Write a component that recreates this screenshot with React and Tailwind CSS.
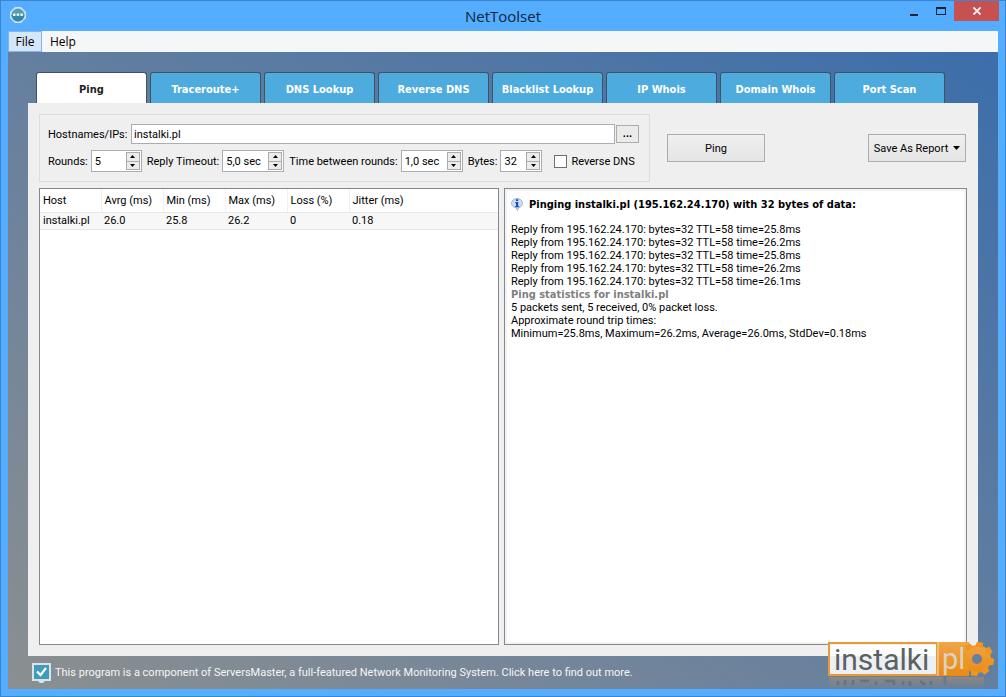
import { useState } from "react";

const tabs = [
  "Ping",
  "Traceroute+",
  "DNS Lookup",
  "Reverse DNS",
  "Blacklist Lookup",
  "IP Whois",
  "Domain Whois",
  "Port Scan",
];

const columns = [
  { name: "Host", width: "w-[61px]" },
  { name: "Avrg (ms)", width: "w-[62px]" },
  { name: "Min (ms)", width: "w-[62px]" },
  { name: "Max (ms)", width: "w-[62px]" },
  { name: "Loss (%)", width: "w-[62px]" },
  { name: "Jitter (ms)", width: "w-auto" },
];

const results = [["instalki.pl", "26.0", "25.8", "26.2", "0", "0.18"]];

const replies = ["25.8ms", "26.2ms", "25.8ms", "26.2ms", "26.1ms"];

function TitleBar() {
  return (
    <header className="grid grid-cols-3 items-start h-[30px] font-['Open_Sans',sans-serif]">
      <svg className="w-[18px] h-[18px] mt-[5px] ml-px" viewBox="0 0 18 18">
        <path d="M6 1h6l5 5v6l-5 5H6l-5-5V6z" fill="#d9dfe2" />
        <circle cx="9" cy="9" r="6.5" fill="#4f9fba" />
        <path d="M2.500 9a6.500 6.500 0 0 0 13 0z" fill="#2f89a8" />
        <path d="M4 7.500h2.500v2.500H4zM7.700 7.500h2.500v2.500H7.700zM11.400 7.500h2.500v2.500h-2.500z" fill="#e6f1f5" />
      </svg>
      <h1 className="text-center text-[15px] leading-[20px] mt-[5px] text-[#10243c]">
        NetToolset
      </h1>
      <div className="flex justify-end -mr-px">
        <button aria-label="Minimize" className="w-[27px] h-5 flex justify-center">
          <svg className="w-2 h-4" viewBox="0 0 8 16">
            <path d="M0 13h8v2H0z" fill="#10243c" />
          </svg>
        </button>
        <button aria-label="Maximize" className="w-[27px] h-5 flex justify-center">
          <svg className="w-[10px] h-4" viewBox="0 0 10 16">
            <path d="M0 6h10v8H0zM1 8v5h8V8z" fill="#10243c" fillRule="evenodd" />
          </svg>
        </button>
        <button
          aria-label="Close"
          className="w-[45px] h-5 bg-[#c75050] flex justify-center items-center"
        >
          <svg className="w-2 h-2" viewBox="0 0 8 8">
            <path d="M.5.5l7 7M7.500.5l-7 7" stroke="#fff" strokeWidth="1.700" />
          </svg>
        </button>
      </div>
    </header>
  );
}

function Spinner({ id, label, value, width }) {
  const [text, setText] = useState(value);
  return (
    <div className="flex items-center gap-[3px]">
      <label htmlFor={id} className="whitespace-nowrap">
        {label}
      </label>
      <div className={`flex h-[22px] bg-white border border-[#abadb3] ${width}`}>
        <input
          id={id}
          value={text}
          onChange={(e) => setText(e.target.value)}
          className="w-0 flex-1 pl-[3px] outline-none"
        />
        <div className="flex flex-col w-[15px] py-px pr-px">
          <button
            aria-label={`Increase ${label}`}
            className="flex-1 flex items-center justify-center border border-[#acacac] bg-[#ececec]"
          >
            <svg className="w-[5px] h-[3px]" viewBox="0 0 5 3">
              <path d="M2.500 0L5 3H0z" />
            </svg>
          </button>
          <button
            aria-label={`Decrease ${label}`}
            className="flex-1 flex items-center justify-center border border-t-0 border-[#acacac] bg-[#ececec]"
          >
            <svg className="w-[5px] h-[3px]" viewBox="0 0 5 3">
              <path d="M0 0h5L2.500 3z" />
            </svg>
          </button>
        </div>
      </div>
    </div>
  );
}

function PingForm() {
  const [host, setHost] = useState("instalki.pl");
  return (
    <div className="flex items-start">
      <div className="w-[611px] h-[68px] border border-[#dcdcdc] pl-2 pr-[10px] pt-[9px]">
        <div className="flex items-center">
          <label htmlFor="host" className="w-[83px]">
            Hostnames/IPs:
          </label>
          <input
            id="host"
            value={host}
            onChange={(e) => setHost(e.target.value)}
            className="flex-1 min-w-0 h-5 bg-white border border-[#abadb3] pl-[2px] outline-none"
          />
          <button className="w-[23px] h-[18px] ml-px border border-[#acacac] bg-[#ebebeb] font-bold leading-[14px]">
            ...
          </button>
        </div>
        <div className="flex items-center gap-[5px] mt-[6px]">
          <Spinner id="rounds" label="Rounds:" value="5" width="w-[51px]" />
          <Spinner id="timeout" label="Reply Timeout:" value="5,0 sec" width="w-[62px]" />
          <Spinner id="between" label="Time between rounds:" value="1,0 sec" width="w-[62px]" />
          <Spinner id="bytes" label="Bytes:" value="32" width="w-[42px]" />
          <label className="flex items-center gap-1 ml-[7px] whitespace-nowrap">
            <input
              type="checkbox"
              className="appearance-none w-[13px] h-[13px] bg-white border border-[#707070] checked:bg-[#4aabdc]"
            />
            Reverse DNS
          </label>
        </div>
      </div>
      <button className="w-[98px] h-7 mt-5 ml-[17px] border border-[#acacac] bg-linear-to-b from-[#efefef] to-[#e5e5e5]">
        Ping
      </button>
      <button className="w-[98px] h-7 mt-5 ml-auto mr-px border border-[#acacac] bg-linear-to-b from-[#efefef] to-[#e5e5e5] flex items-center justify-center gap-[5px] whitespace-nowrap">
        Save As Report
        <svg className="w-[7px] h-1" viewBox="0 0 7 4">
          <path d="M0 0h7L3.500 4z" />
        </svg>
      </button>
    </div>
  );
}

function ResultsTable() {
  return (
    <div className="min-w-0 bg-white border border-[#828790]">
      <table className="w-full table-fixed border-collapse text-left">
        <thead>
          <tr className="h-[23px]">
            {columns.map((col) => (
              <th
                key={col.name}
                className={`pl-[3px] font-normal border-r border-[#f0f0f0] last:border-r-0 ${col.width}`}
              >
                {col.name}
              </th>
            ))}
          </tr>
        </thead>
        <tbody>
          {results.map((row) => (
            <tr key={row[0]} className="h-[17px] bg-[#f7f7f7] border-y border-[#e8e8e8]">
              {row.map((cell, i) => (
                <td key={i} className="pl-[3px] whitespace-nowrap">
                  {cell}
                </td>
              ))}
            </tr>
          ))}
        </tbody>
      </table>
    </div>
  );
}

function InfoIcon() {
  return (
    <svg className="w-3 h-[13px] mr-[6px]" viewBox="0 0 12 13">
      <path
        d="M6 .5C9 .5 11.500 2.500 11.500 5.200c0 2.300-1.700 4-3.800 4.500L6.500 12.500 5 9.800C2.500 9.500.5 7.700.5 5.200.5 2.500 3 .5 6 .5z"
        fill="#cfdef2"
        stroke="#8fa9cf"
        strokeWidth=".8"
      />
      <path d="M5 1.200h2.200v1.900H5zM4.200 4H7.200v4.200h1v1H4v-1h1V5h-.8z" fill="#1750b3" />
    </svg>
  );
}

function Output() {
  return (
    <div className="min-w-0 bg-white border border-[#828790]">
      <div className="h-full border-2 border-[#f3f3f3] pl-1 pt-[7px] leading-[13px]">
        <h2 className="flex items-center font-['DejaVu_Sans_Condensed',sans-serif] font-bold h-[13px] mb-[12px]">
          <InfoIcon />
          Pinging instalki.pl (195.162.24.170) with 32 bytes of data:
        </h2>
        {replies.map((time, i) => (
          <p key={i}>Reply from 195.162.24.170: bytes=32 TTL=58 time={time}</p>
        ))}
        <h3 className="font-['DejaVu_Sans_Condensed',sans-serif] font-bold text-[#808080]">
          Ping statistics for instalki.pl
        </h3>
        <p>5 packets sent, 5 received, 0% packet loss.</p>
        <p>Approximate round trip times:</p>
        <p>Minimum=25.8ms, Maximum=26.2ms, Average=26.0ms, StdDev=0.18ms</p>
      </div>
    </div>
  );
}

const teeth = [0, 45, 90, 135, 180, 225, 270, 315];

function Watermark() {
  return (
    <svg
      className="absolute right-[9px] bottom-[6px] w-[168px] h-[48px]"
      viewBox="0 0 168 48"
      fontFamily="Roboto, sans-serif"
    >
      <defs>
        <linearGradient id="orange" gradientUnits="userSpaceOnUse" x1="0" y1="0" x2="0" y2="34">
          <stop offset="0" stopColor="#f0a548" />
          <stop offset="1" stopColor="#ea8a10" />
        </linearGradient>
        <linearGradient id="mirror" x1="0" y1="0" x2="0" y2="1">
          <stop offset="0" stopColor="#a08c72" stopOpacity=".7" />
          <stop offset="1" stopColor="#8c8478" stopOpacity=".1" />
        </linearGradient>
      </defs>
      <rect x="1" y="35" width="155" height="12" fill="url(#mirror)" />
      <path
        d="M10 39v4M17 38v5M25 38v5M32 39h9M48 39v4M57 39h9M66 38v5M75 39v4M82 39v5M92 39l5 4M103 39v4"
        stroke="#56697f"
        strokeWidth="2.500"
        opacity=".6"
      />
      <rect x="1" y="1" width="108" height="32" fill="#fff" fillOpacity=".88" />
      <rect x="109" width="32" height="34" fill="url(#orange)" />
      <circle cx="149" cy="17" r="14" fill="url(#orange)" />
      {teeth.map((deg) => (
        <path key={deg} d="M146 0h6l1 5h-8z" fill="#ee961f" transform={`rotate(${deg + 10} 149 17)`} />
      ))}
      <circle cx="149" cy="17" r="5" fill="#687f9f" />
      <rect x="1" y="1" width="108" height="32" fill="none" stroke="#e99a37" strokeWidth="2" />
      <path d="M110 0v34" stroke="#e9dfd0" strokeWidth="1" />
      <path d="M117 34v9" stroke="#687a92" strokeWidth="3" />
      <text x="6" y="28" fontSize="30" fill="#5d6063">
        instalki
      </text>
      <text x="114" y="27" fontSize="29" fill="#d9d2c5">
        pl
      </text>
    </svg>
  );
}

export default function App() {
  const [active, setActive] = useState("Ping");
  return (
    <div className="relative min-h-screen flex flex-col bg-[#55adff] border border-[#3c84cb] px-[7px] pb-[7px] font-[Roboto,'DejaVu_Sans',sans-serif] text-[11px] leading-[13px] text-black">
      <TitleBar />
      <nav className="flex h-[21px] bg-[#f5f6f7] font-['Open_Sans',sans-serif] text-[12px]">
        <button className="w-[34px] border border-[#84b5ec] bg-[#d5e6f8]">File</button>
        <button className="px-2">Help</button>
      </nav>
      <main className="flex-1 flex flex-col bg-linear-to-tr from-[#8b8f90] via-[#647f9f] to-[#3c6eaa] px-5 pt-5">
        <div role="tablist" className="flex gap-[3px] pl-2">
          {tabs.map((tab) => (
            <button
              key={tab}
              role="tab"
              aria-selected={tab === active}
              onClick={() => setActive(tab)}
              className={`w-[111px] h-[31px] pt-[3px] rounded-t-[3px] border border-b-0 border-[#3f5363] font-['DejaVu_Sans_Condensed',sans-serif] font-bold whitespace-nowrap ${
                tab === active ? "bg-white text-[#222222]" : "bg-[#4dabdd] text-white"
              }`}
            >
              {tab}
            </button>
          ))}
        </div>
        <section className="flex-1 flex flex-col gap-[6px] bg-[#efefef] px-[11px] pt-[11px] pb-[11px]">
          <PingForm />
          <div className="flex-1 grid grid-cols-[460fr_463fr] gap-[5px]">
            <ResultsTable />
            <Output />
          </div>
        </section>
        <footer className="h-[33px] pl-1">
          <a href="#serversmaster" className="flex items-center gap-1 h-[33px] text-[#f4f6f8]">
            <svg className="w-[19px] h-[20px]" viewBox="0 0 19 20">
              <path d="M0 0h19v18h-6l-2 2H8l-2-2H0z" fill="#dce3e6" />
              <path d="M2 2h15v14H2z" fill="#3e9cbc" />
              <path d="M5 8.500l3.500 3.500L14 5" fill="none" stroke="#fff" strokeWidth="2.300" />
            </svg>
            This program is a component of ServersMaster, a full-featured Network Monitoring System.
            Click here to find out more.
          </a>
        </footer>
      </main>
      <Watermark />
    </div>
  );
}
